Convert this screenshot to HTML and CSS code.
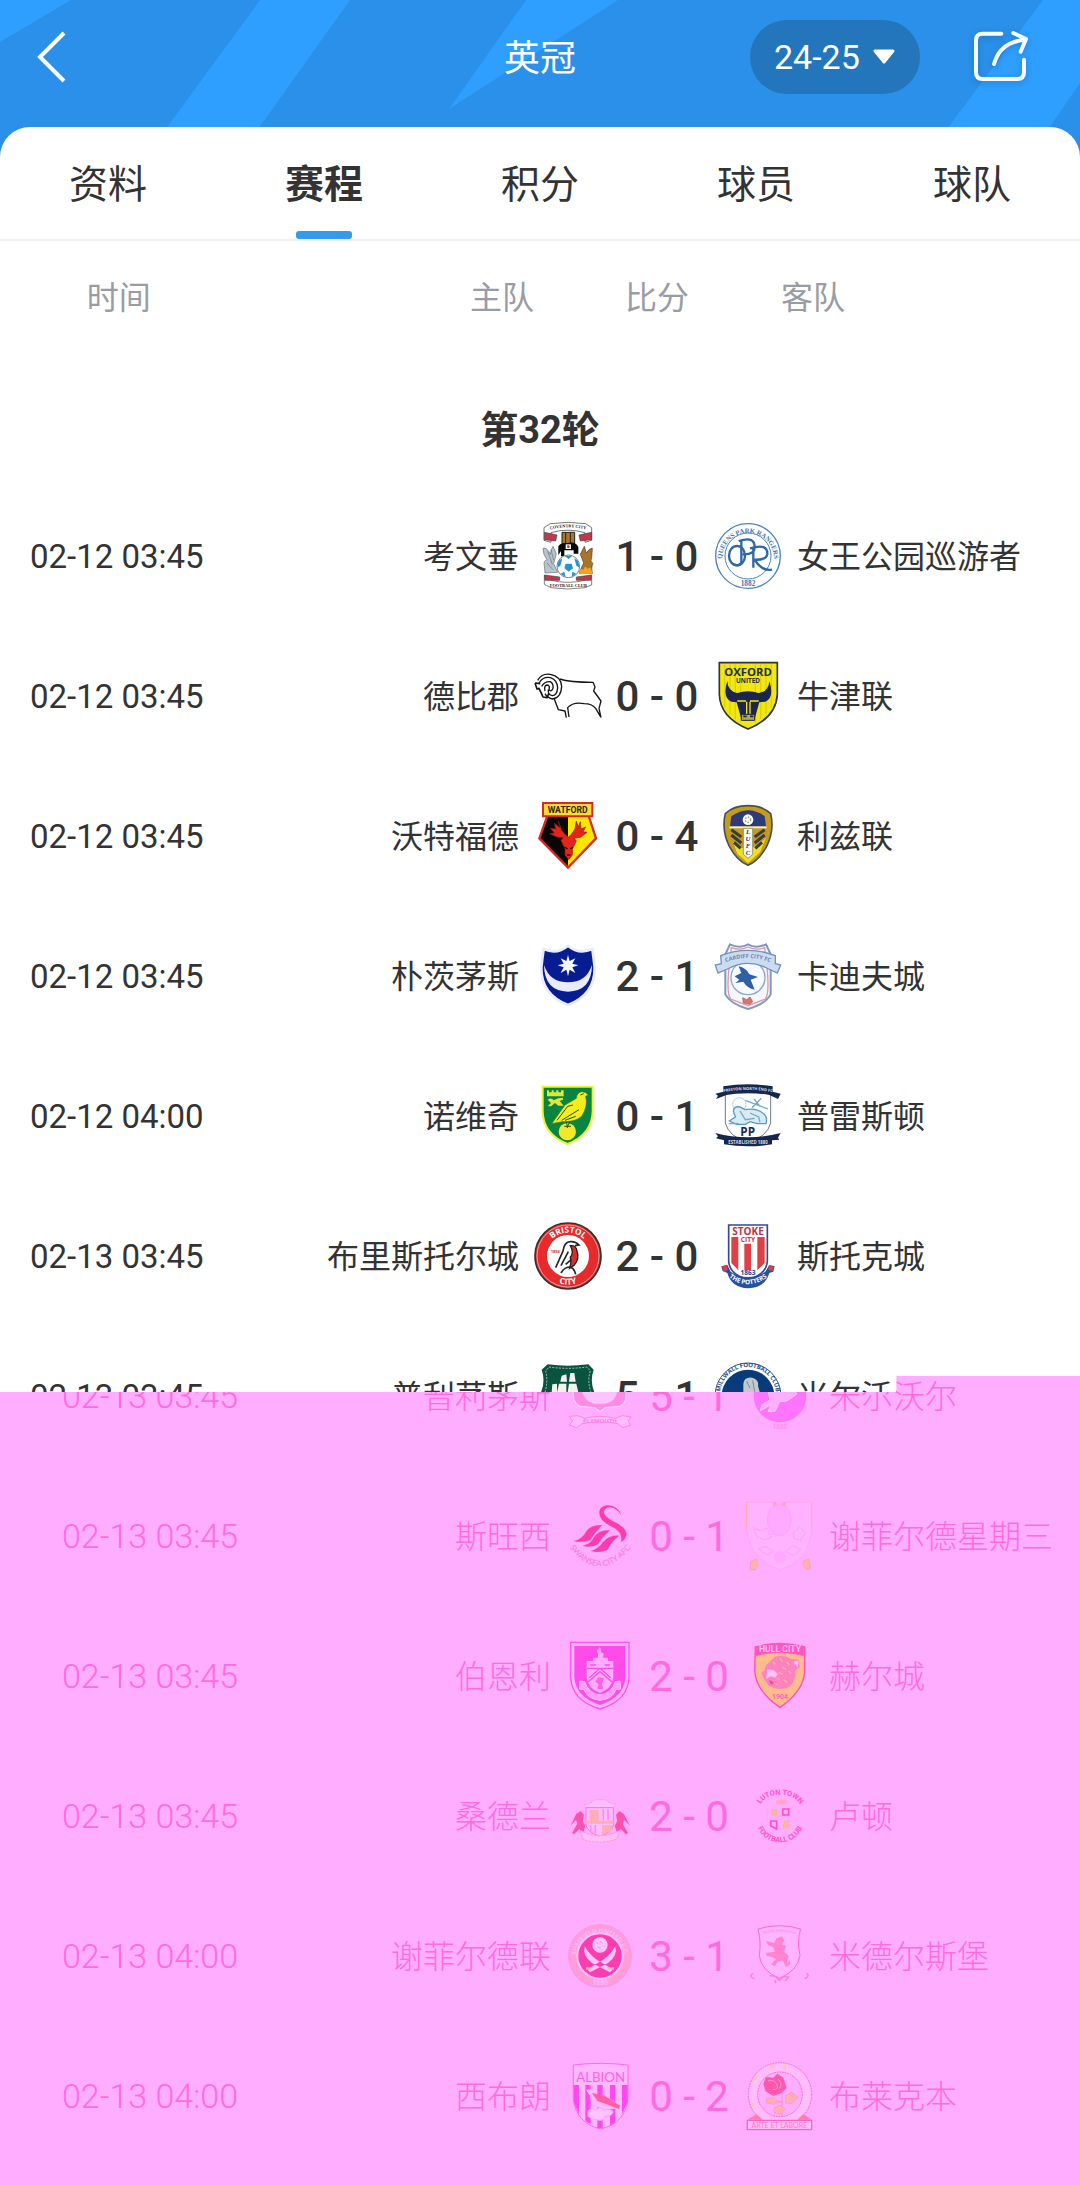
FILE: index.html
```html
<!DOCTYPE html>
<html lang="zh-CN">
<head>
<meta charset="utf-8">
<meta name="viewport" content="width=device-width, initial-scale=1">
<title>英冠</title>
<link rel="stylesheet" href="styles.css">
</head>
<body>
<header class="hero">
  <svg class="hero-bg" viewBox="0 0 1080 160" preserveAspectRatio="none" aria-hidden="true">
    <path fill="#2e9fff" d="M0 0H71L0 42ZM260 0H350L236 160H143ZM526 0H618L449 109ZM1043 0H1080V83L1027 160H924Z"/>
  </svg>
  <div class="bar">
    <button class="icon-btn back" type="button" aria-label="返回">
      <svg width="32" height="56" viewBox="0 0 32 56"><path d="M28 4L4 28L28 52" fill="none" stroke="#fff" stroke-width="4"/></svg>
    </button>
    <h1 class="title">英冠</h1>
    <div class="tools">
      <label class="season">
        <select class="season-select" aria-label="赛季"><option>24-25</option></select>
        <svg width="24" height="16" viewBox="0 0 24 16" aria-hidden="true"><path d="M3 2H21L12 13Z" fill="#fff" stroke="#fff" stroke-width="3" stroke-linejoin="round"/></svg>
      </label>
      <button class="icon-btn share" type="button" aria-label="分享">
        <svg width="60" height="56" viewBox="816 90 180 168" fill="none" stroke="#f4fdff" stroke-width="12" stroke-linecap="round" stroke-linejoin="round"><path d="M904 104H848Q828 104 828 124V220Q828 240 848 240H952Q972 240 972 220V182M882 195Q900 128 976 122M940 102L978 120L962 158"/></svg>
      </button>
    </div>
  </div>
</header>

<main class="sheet">
  <nav class="tabs">
    <a class="tab" href="#info">资料</a>
    <a class="tab tab-on" href="#fixtures">赛程</a>
    <a class="tab" href="#standings">积分</a>
    <a class="tab" href="#players">球员</a>
    <a class="tab" href="#teams">球队</a>
  </nav>

  <div class="upper">
  <table class="matches">
    <colgroup><col class="c-time"><col><col class="c-score"><col class="c-away"></colgroup>
    <thead>
      <tr class="heads"><th class="h-time" scope="col">时间</th><th class="h-home" scope="col">主队</th><th scope="col">比分</th><th class="h-away" scope="col">客队</th></tr>
    </thead>
    <tbody>
      <tr class="round"><th colspan="4" scope="colgroup">第32轮</th></tr>
      <tr>
        <td class="time">02-12 03:45</td>
        <td><div class="team home"><span class="name">考文垂</span>
          <svg class="crest" viewBox="36 60 210 210" aria-hidden="true">
            <path d="M88 68Q140 60 194 68L212 80V118L192 124V95Q140 80 90 95V124L69 118V80Z" fill="#fff" stroke="#333" stroke-width="2"/>
            <path d="M70 94L108 102L104 120L70 116ZM212 94L174 102L178 120L212 116Z" fill="#c4364a" stroke="#444" stroke-width="2"/>
            <path id="cov1" d="M76 88Q140 70 206 88" fill="none"/>
            <text class="c-serif" font-size="13" fill="#222"><textPath href="#cov1" startOffset="50%" text-anchor="middle">COVENTRY CITY</textPath></text>
            <path d="M123 94H161V128H123Z" fill="#a87728" stroke="#222" stroke-width="3"/><path d="M134 94V128M148 94V128" stroke="#222" stroke-width="3"/>
            <path d="M112 162V136Q118 124 140 126Q164 120 172 138V158H158V148H130V166H120V150Z" fill="#080808"/>
            <path d="M134 130H150V144H134Z" fill="#fff"/><circle cx="142" cy="137" r="4" fill="#d22"/>
            <path d="M66 142Q78 138 88 160Q90 144 96 136L106 158L98 188L110 214L72 216L70 194Q66 180 78 176Q66 162 66 142Z" fill="#b7c4cc" stroke="#61717c" stroke-width="2"/>
            <path d="M80 150L94 190M90 146L98 178M78 186L96 206" stroke="#61717c" stroke-width="2"/>
            <path d="M214 142Q204 142 196 156L190 136L178 160L188 186L174 216L214 218Q210 196 216 188Q206 180 212 170Z" fill="#a9752a" stroke="#57390f" stroke-width="2"/>
            <path d="M174 220Q176 198 188 206Q192 190 200 204Q210 190 214 218Z" fill="#f4a11f"/>
            <circle cx="142" cy="196" r="34" fill="#fff" stroke="#445" stroke-width="2"/>
            <path d="M134 188H152L156 202L143 212L130 202ZM112 180L124 172L118 194L109 200ZM172 180L160 172L166 194L175 200ZM130 164H154L143 174ZM118 218L130 212L134 228ZM166 218L154 212L152 228Z" fill="#2496cd"/>
            <path d="M70 224L90 228V238Q140 250 192 238V228L212 224V252L192 260Q140 268 90 260L70 250Z" fill="#fff" stroke="#444" stroke-width="2"/>
            <path d="M70 222L116 228V238L72 238ZM212 222L166 228V238L210 238Z" fill="#c4364a" stroke="#444" stroke-width="2"/>
            <text x="142" y="257" text-anchor="middle" class="c-serif" font-size="13" fill="#222">FOOTBALL CLUB</text>
          </svg></div></td>
        <td class="score">1 - 0</td>
        <td><div class="team">
          <svg class="crest" viewBox="579 60 210 210" aria-hidden="true">
            <g fill="none" stroke="#4a84bd"><circle cx="684" cy="165" r="97" stroke-width="4"/><circle cx="684" cy="165" r="69" stroke-width="3"/></g>
            <path id="qpr1" d="M607 186A78 78 0 1 1 761 186" fill="none"/>
            <text class="c-serif" font-size="20" fill="#3f74ad"><textPath href="#qpr1" startOffset="50%" text-anchor="middle">QUEENS PARK RANGERS</textPath></text>
            <text x="684" y="254" text-anchor="middle" class="c-serif" font-size="22" fill="#3f74ad">1882</text>
            <g fill="none" stroke="#2e68a8" stroke-width="7"><ellipse cx="651" cy="164" rx="24" ry="29"/><path d="M664 118V186Q656 198 642 190M656 120Q704 104 704 138Q704 162 668 160M700 140V200M690 142Q744 126 742 160Q738 178 704 176Q726 212 756 206"/></g>
          </svg><span class="name">女王公园巡游者</span></div></td>
      </tr>
      <tr>
        <td class="time">02-12 03:45</td>
        <td><div class="team home"><span class="name">德比郡</span>
          <svg class="crest" viewBox="36 480 210 210" aria-hidden="true">
            <g fill="none" stroke="#151515" stroke-width="4" stroke-linejoin="round"><path d="M116 534Q146 544 216 544L222 558L218 570L240 600L234 622L240 650M238 646L224 622Q212 608 190 608Q156 602 140 620L144 648M136 650L132 630L112 626L100 594"/><path d="M50 538Q62 516 88 520Q120 526 122 556Q120 592 94 594Q78 590 72 578M54 546Q66 526 88 530Q108 536 110 560Q108 584 94 584Q80 582 82 566M62 556Q72 540 88 542Q98 548 96 562Q92 574 84 566Q88 552 78 552Q68 554 72 570"/><path d="M42 546L48 564L54 562L66 588L78 590L84 576M42 546L58 548M66 588L60 574" stroke-width="5"/></g>
          </svg></div></td>
        <td class="score">0 - 0</td>
        <td><div class="team">
          <svg class="crest" viewBox="579 480 210 210" aria-hidden="true">
            <path d="M598 485H772V580Q768 650 684 684Q600 650 598 580Z" fill="#f2e713" stroke="#2a3445" stroke-width="5"/>
            <path d="M614 490V620M630 490V640M646 490V654M662 490V664M706 490V664M722 490V654M738 490V640M754 490V620" stroke="#ddd00c" stroke-width="4"/>
            <text x="684" y="524" text-anchor="middle" class="c-sans" font-size="34" fill="#252f42">OXFORD</text>
            <text x="684" y="545" text-anchor="middle" class="c-sans" font-size="19" fill="#252f42">UNITED</text>
            <path d="M622 540Q624 572 652 576Q684 566 716 576Q746 572 748 540Q764 590 736 602L718 604L704 654Q684 662 664 654L650 604L634 602Q606 588 622 540Z" fill="#1c2550"/>
            <path d="M652 600H678M690 600H716M680 602V640M690 602V640" stroke="#f2e713" stroke-width="4"/><path d="M664 640H704V658H664Z" fill="#b9a934" stroke="#1c2550" stroke-width="3"/><path d="M670 646H680M690 646H700" stroke="#1c2550" stroke-width="5"/>
          </svg><span class="name">牛津联</span></div></td>
      </tr>
      <tr>
        <td class="time">02-12 03:45</td>
        <td><div class="team home"><span class="name">沃特福德</span>
          <svg class="crest" viewBox="36 60 210 210" aria-hidden="true">
            <path d="M80 104H202L226 172L141 262L54 172Z" fill="#fce600"/><path d="M80 104H141V262L54 172Z" fill="#090606"/>
            <path d="M78 108L55 172L141 260L225 172L204 108" fill="none" stroke="#d52a24" stroke-width="7"/>
            <path d="M66 66H214V106H66Z" fill="#fbd93b" stroke="#d52a24" stroke-width="6"/>
            <text x="140" y="95" text-anchor="middle" class="c-cond" font-size="26" fill="#332209">WATFORD</text>
            <path d="M112 120L118 140L106 132L100 126L104 144L88 142L100 156L86 158L108 168L126 170L120 178L132 204V222L143 236L154 222L154 204L166 180L160 172L180 168L198 154L186 152L194 138L180 144L178 122L172 138L166 120L162 144L150 162L142 168L134 162L122 148Z" fill="#e3251e" stroke="#8f1814" stroke-width="2"/>
            <path d="M130 198L140 204M156 198L148 204M138 222H148" stroke="#300" stroke-width="4"/>
          </svg></div></td>
        <td class="score">0 - 4</td>
        <td><div class="team">
          <svg class="crest" viewBox="579 60 210 210" aria-hidden="true">
            <path d="M684 74Q728 74 752 98Q764 146 740 196Q716 240 684 253Q652 240 628 196Q604 146 616 98Q640 74 684 74Z" fill="#c49b1c" stroke="#44505c" stroke-width="5"/>
            <path d="M638 180Q684 230 738 170L720 214L684 246L652 218Z" fill="#efe025"/>
            <path d="M634 106Q660 88 684 88Q710 88 734 106L738 136H630Z" fill="#2d3b7d"/><path d="M628 139H740" stroke="#eee" stroke-width="5"/>
            <path d="M634 146L664 168M634 162L664 186M642 184L662 202M734 146L704 168M734 162L704 186M726 184L706 202" stroke="#373c42" stroke-width="9"/>
            <path d="M670 142H698V220L684 232L670 220Z" fill="#f7f7f1" stroke="#7b7443" stroke-width="2"/>
            <circle cx="684" cy="116" r="16" fill="#fff"/><circle cx="684" cy="116" r="8" fill="none" stroke="#9ca878" stroke-width="4" stroke-dasharray="5 4"/>
            <g class="c-serif" font-size="20" fill="#263a70" font-style="italic" text-anchor="middle"><text x="684" y="160">L</text><text x="684" y="181">U</text><text x="684" y="202">F</text><text x="684" y="223">C</text></g>
          </svg><span class="name">利兹联</span></div></td>
      </tr>
      <tr>
        <td class="time">02-12 03:45</td>
        <td><div class="team home"><span class="name">朴茨茅斯</span>
          <svg class="crest" viewBox="36 480 210 210" aria-hidden="true">
            <path d="M68 504Q108 522 141 494Q174 522 214 504Q218 530 221 560Q222 640 141 672Q60 640 61 560Q64 530 68 504Z" fill="#071c91" stroke="#e9ecfa" stroke-width="8"/>
            <path d="M69 552Q86 604 141 604Q196 604 213 552Q212 630 141 632Q70 630 69 552Z" fill="#e9ebfa"/>
            <path d="M141 522L146 540L163 532L154 548L172 553L154 559L163 576L146 566L141 586L136 566L119 576L128 559L110 553L128 548L119 532L136 540Z" fill="#f5f6fc"/>
          </svg></div></td>
        <td class="score">2 - 1</td>
        <td><div class="team">
          <svg class="crest" viewBox="579 480 210 210" aria-hidden="true">
            <path d="M630 490Q660 504 684 490Q708 504 738 490L752 520V640Q738 668 684 684Q630 668 616 640V520Z" fill="#f6f7fb" stroke="#8299bd" stroke-width="6"/>
            <path d="M634 500Q660 510 684 498Q708 510 734 500L742 570Q748 640 736 654L684 674L632 654Q620 640 626 570Z" fill="none" stroke="#d99aaa" stroke-width="4"/>
            <circle cx="684" cy="590" r="51" fill="#f7faff" stroke="#8fa8cc" stroke-width="4"/>
            <path d="M602 524Q684 492 766 524V548L782 552L772 576L746 564Q684 530 622 564L594 576L586 552L604 548Z" fill="#cbdcf0" stroke="#7192be" stroke-width="4"/>
            <path id="cardiff1" d="M604 550Q684 512 764 550" fill="none"/>
            <text class="c-sans" font-size="17" fill="#6a88b5"><textPath href="#cardiff1" startOffset="50%" text-anchor="middle">CARDIFF CITY FC</textPath></text>
            <path d="M644 586L664 576L656 556Q678 560 688 580L714 588L692 596L704 626Q682 622 670 602L646 606L658 596Z" fill="#2e60a4"/>
            <path d="M668 650L680 656L690 648L698 662L690 670L670 666Z" fill="#d4776e" stroke="#c34640" stroke-width="2"/>
          </svg><span class="name">卡迪夫城</span></div></td>
      </tr>
      <tr>
        <td class="time">02-12 04:00</td>
        <td><div class="team home"><span class="name">诺维奇</span>
          <svg class="crest" viewBox="36 60 210 210" aria-hidden="true">
            <path d="M65 77H215V150Q214 220 140 249Q66 220 65 150Z" fill="#088541" stroke="#f0ef30" stroke-width="6"/>
            <path d="M78 88H84V94H92V88H98V94H106V88H112V94H120V88H128V106H78ZM80 116Q92 108 98 118L112 112L126 110V116L116 120L128 134H112L102 126L90 136H80L90 126Z" fill="#dfe73a"/>
            <circle cx="139" cy="212" r="26" fill="#efe82b"/>
            <path d="M92 188L132 132L166 112Q168 92 184 92Q194 92 202 102L194 106Q202 136 182 166Q162 184 124 182Z" fill="#f3ed19" stroke="#36742c" stroke-width="2"/>
            <path d="M108 178L140 136L156 132M122 178L174 146M132 178L164 166M178 102L188 98M136 182L140 200M148 180L138 200M130 196H150" fill="none" stroke="#294e24" stroke-width="3"/>
          </svg></div></td>
        <td class="score">0 - 1</td>
        <td><div class="team">
          <svg class="crest" viewBox="579 60 210 210" aria-hidden="true">
            <path d="M616 96H752V186Q742 226 684 246Q626 226 616 186Z" fill="#fff" stroke="#27344f" stroke-width="2"/>
            <path d="M610 76Q684 64 758 76V92L782 98L774 114L748 102Q684 90 620 102L588 114L594 104L586 98L610 92ZM586 216Q684 242 782 216L774 230L778 236L756 238V250Q684 262 612 250V238L588 232L594 226Z" fill="#17264c"/>
            <path id="pne1" d="M608 94Q684 80 760 94" fill="none"/>
            <text class="c-sans" font-size="12" fill="#d7dce6"><textPath href="#pne1" startOffset="50%" text-anchor="middle">PRESTON NORTH END FC</textPath></text>
            <text x="684" y="250" text-anchor="middle" class="c-sans" font-size="13" fill="#d7dce6">ESTABLISHED 1880</text>
            <circle cx="658" cy="130" r="20" fill="none" stroke="#8fb7ce" stroke-width="2"/>
            <path d="M628 180L646 168L640 150Q642 134 660 138L674 146Q708 140 728 156Q744 166 738 188H712L690 182L676 190H650Z" fill="#d8eaf3" stroke="#559cc3" stroke-width="4"/>
            <path d="M696 140L724 112M702 114L720 136M676 118L744 144M626 188H656M660 150L676 176L704 172M690 156L716 168L720 184" fill="none" stroke="#75a9c7" stroke-width="4"/>
            <text x="683" y="226" text-anchor="middle" class="c-sans" font-size="35" fill="#172a52">PP</text>
          </svg><span class="name">普雷斯顿</span></div></td>
      </tr>
      <tr>
        <td class="time">02-13 03:45</td>
        <td><div class="team home"><span class="name">布里斯托尔城</span>
          <svg class="crest" viewBox="36 480 210 210" aria-hidden="true">
            <circle cx="141" cy="585" r="99" fill="#e72b2d" stroke="#353132" stroke-width="5"/><circle cx="141" cy="585" r="93" fill="none" stroke="#f8d8d8" stroke-width="2"/><circle cx="141" cy="585" r="63" fill="#fff"/>
            <path id="bc1" d="M71 585A70 70 0 0 1 211 585" fill="none"/><path id="bc2" d="M55 585A86 86 0 0 0 227 585" fill="none"/>
            <g class="c-sans" font-size="25" fill="#fff"><text><textPath href="#bc1" startOffset="50%" text-anchor="middle">BRISTOL</textPath></text><text><textPath href="#bc2" startOffset="50%" text-anchor="middle">CITY</textPath></text></g>
            <path d="M148 554Q166 552 168 570Q176 594 160 612L146 622Q152 604 148 588Q160 576 148 554Z" fill="#d92e30" stroke="#222" stroke-width="4"/>
            <path d="M104 620L126 570Q130 542 148 542Q162 540 174 552L162 554M120 614L142 572M120 636Q130 618 148 618Q160 622 164 640M134 610L148 598" fill="none" stroke="#262626" stroke-width="5"/>
            <text x="103" y="575" text-anchor="middle" class="c-sans" font-size="12" fill="#c33">1894</text>
          </svg></div></td>
        <td class="score">2 - 0</td>
        <td><div class="team">
          <svg class="crest" viewBox="579 480 210 210" aria-hidden="true">
            <path d="M626 492H742V600Q740 640 684 656Q628 640 626 600Z" fill="#fff" stroke="#334a92" stroke-width="5"/>
            <path d="M634 528H655V628L634 606ZM673 548H693V628H673ZM712 528H734V606L712 628Z" fill="#df4048"/>
            <text x="684" y="523" text-anchor="middle" class="c-sans" font-size="30" fill="#c72f43">STOKE</text>
            <text x="684" y="543" text-anchor="middle" class="c-sans" font-size="20" fill="#c72f43">CITY</text>
            <path d="M604 616L622 612L632 632Q684 664 736 632L748 612L764 616L760 632L748 636Q736 680 684 682Q634 680 622 636L608 630Z" fill="#2751a0"/>
            <path d="M606 616L620 612L624 626L612 632ZM746 614L762 617L758 630L744 626Z" fill="#d83c4d"/>
            <text x="684" y="643" text-anchor="middle" class="c-sans" font-size="20" fill="#27468d">1863</text>
            <path id="stoke1" d="M618 642Q684 698 750 642" fill="none"/>
            <text class="c-sans" font-size="19" fill="#fff"><textPath href="#stoke1" startOffset="50%" text-anchor="middle">THE POTTERS</textPath></text>
          </svg><span class="name">斯托克城</span></div></td>
      </tr>
      <tr>
        <td class="time">02-13 03:45</td>
        <td><div class="team home"><span class="name">普利茅斯</span>
          <svg class="crest" viewBox="-24 30 210 210" aria-hidden="true">
            <path d="M20 40Q80 48 142 40L158 56Q146 90 160 124L150 180L80 210L10 180L0 124Q14 90 2 56Z" fill="#08543f"/>
            <path d="M24 48Q80 56 138 48L148 60Q138 90 150 124M12 124Q22 90 14 60L24 48" fill="none" stroke="#f0f5f2" stroke-width="2" stroke-dasharray="6 4"/>
            <path d="M62 74L58 92H78L76 70ZM88 66L84 92H104L100 66ZM34 100L32 124H48V98ZM54 98L48 124H76V98ZM84 98L80 124H112L106 98Z" fill="#f2f3ed"/>
          </svg></div></td>
        <td class="score">5 - 1</td>
        <td><div class="team">
          <svg class="crest" viewBox="519 30 210 210" aria-hidden="true">
            <circle cx="624" cy="135" r="99" fill="#fff" stroke="#315b91" stroke-width="3"/><circle cx="624" cy="135" r="79" fill="#073b7b"/>
            <path id="mil1" d="M541 145A84 84 0 1 1 707 145" fill="none"/>
            <text class="c-sans" font-size="18" fill="#264f83"><textPath href="#mil1" startOffset="50%" text-anchor="middle">MILLWALL FOOTBALL CLUB</textPath></text>
            <path d="M610 126V98Q612 78 636 80Q658 86 654 104L660 126L646 140H608Z" fill="#c2c8cb"/><path d="M620 90L630 112M638 88L644 122" stroke="#7c8c99" stroke-width="3"/>
          </svg><span class="name">米尔沃尔</span></div></td>
      </tr>
    </tbody>
  </table>
  </div>

  <section class="lower">
  <table class="matches shifted">
    <colgroup><col class="c-time"><col><col class="c-score"><col class="c-away"></colgroup>
    <tbody>
      <tr>
        <td class="time">02-13 03:45</td>
        <td><div class="team home"><span class="name">普利茅斯</span>
          <svg class="crest" viewBox="71 30 210 210" aria-hidden="true">
            <path d="M96 110V138Q98 156 116 166L160 170L176 182L192 170L236 166Q254 156 254 138V110Z" fill="#ff8be7" stroke="#ffcfff" stroke-width="4"/><path d="M122 120H228Q224 152 192 158H158Q128 150 122 120Z" fill="#ffc3ff"/>
            <path d="M84 196L110 194L130 202Q176 190 222 202L244 194L270 198L260 210L268 222L244 230L230 218Q176 208 122 218L106 230L84 222L94 210Z" fill="#ffbdfc" stroke="#ff84e8" stroke-width="3"/>
            <text x="176" y="216" text-anchor="middle" class="c-sans" font-size="18" fill="#ff7fe7">PLYMOUTH</text>
          </svg></div></td>
        <td class="score">5 - 1</td>
        <td><div class="team">
          <svg class="crest" viewBox="615 30 210 210" aria-hidden="true">
            <circle cx="720" cy="135" r="79" fill="#ff74ff"/><circle cx="720" cy="135" r="98" fill="none" stroke="#ff93f7" stroke-width="2" stroke-dasharray="3 6"/>
            <path d="M760 106L770 130L740 150L718 152L706 180L684 182L694 160L660 180L666 162L690 146L684 120Z" fill="#ffadff" stroke="#ffcaff" stroke-width="3"/>
            <text x="720" y="234" text-anchor="middle" class="c-sans" font-size="19" fill="#ff8df2">1885</text>
          </svg><span class="name">米尔沃尔</span></div></td>
      </tr>
      <tr>
        <td class="time">02-13 03:45</td>
        <td><div class="team home"><span class="name">斯旺西</span>
          <svg class="crest" viewBox="71 450 210 210" aria-hidden="true">
            <path d="M240 492Q228 462 196 463Q164 470 178 500Q184 514 220 532Q246 548 238 574Q260 560 254 542Q248 526 214 510Q184 494 188 480Q196 462 218 472Q232 480 240 492ZM182 522Q148 520 134 542Q122 566 96 570Q122 576 146 568Q160 546 182 522ZM206 538Q174 534 158 558Q148 580 124 584Q148 592 170 580Q184 556 206 538ZM234 554Q204 550 184 574Q174 592 148 600Q176 608 198 596Q214 568 234 554Z" fill="#ff3cae"/>
            <path id="swa1" d="M74 576Q176 716 280 576" fill="none"/>
            <text class="c-light" font-size="24" fill="#ff73dc"><textPath href="#swa1" startOffset="50%" text-anchor="middle">SWANSEA CITY AFC</textPath></text>
          </svg></div></td>
        <td class="score">0 - 1</td>
        <td><div class="team">
          <svg class="crest" viewBox="615 450 210 210" aria-hidden="true">
            <path d="M620 454H815V540Q806 630 720 656Q634 630 620 540Z" fill="#ffb3ff" stroke="#ffa0ea" stroke-width="2"/><path d="M620 454V530M815 454V530" stroke="#ffae9d" stroke-width="3"/>
            <ellipse cx="718" cy="506" rx="36" ry="48" fill="#ffaaff" stroke="#ff9cf8" stroke-width="2"/><circle cx="720" cy="618" r="18" fill="#ffa8fd"/>
            <path d="M640 530L662 540L680 530L694 560L674 566L650 558ZM760 544L780 528L796 546L782 568L762 562ZM656 594L676 586L700 600L682 612ZM736 602L760 584L782 596L760 614Z" fill="none" stroke="#ff99ed" stroke-width="3" stroke-dasharray="6 3"/>
            <path d="M700 456H708V464H700ZM728 456H736V464H728ZM632 632L650 624L654 642L646 656H630ZM790 630L806 624L812 654H798L788 640Z" fill="#ffb3a2" stroke="#ff92cb" stroke-width="2"/>
          </svg><span class="name">谢菲尔德星期三</span></div></td>
      </tr>
      <tr>
        <td class="time">02-13 03:45</td>
        <td><div class="team home"><span class="name">伯恩利</span>
          <svg class="crest" viewBox="71 60 210 210" aria-hidden="true">
            <path d="M88 64H263V170Q260 238 176 264Q92 238 88 170Z" fill="#ffb4ff" stroke="#ff51ed" stroke-width="4"/><path d="M99 75H252V170Q248 228 176 252Q104 228 99 170Z" fill="#ff4bea"/>
            <path d="M136 120H156V110H170V98L166 90L176 78L180 94L188 98L184 110H200V120H216V170Q214 200 176 216Q138 200 136 170Z" fill="#ffadff"/>
            <path d="M146 132H164M190 132H206M136 142H216M136 186L176 152L216 186M144 170L176 142L208 170" fill="none" stroke="#ff4bea" stroke-width="4"/>
            <path d="M170 168L188 172L182 190L186 204H168L172 190L162 182Z" fill="#ff60ed"/>
            <path d="M116 180L130 182Q142 218 176 222Q210 218 222 182L236 180L238 204L224 206Q214 234 176 238Q138 234 128 206L114 204Z" fill="#ff9dff" stroke="#ffc0ff" stroke-width="3"/>
          </svg></div></td>
        <td class="score">2 - 0</td>
        <td><div class="team">
          <svg class="crest" viewBox="615 60 210 210" aria-hidden="true">
            <path d="M646 78Q720 56 794 78V150Q792 210 720 259Q648 210 644 150Z" fill="#ffbc8d" stroke="#ff4faf" stroke-width="4"/><path d="M645 78Q720 56 795 78V106Q720 84 645 106Z" fill="#ff57bb"/>
            <text x="720" y="94" text-anchor="middle" class="c-cond" font-size="26" fill="#ffb7ff">HULL CITY</text>
            <path d="M678 132L692 120L704 108Q730 98 752 114L776 116L780 138L766 148Q768 182 746 198Q716 212 686 194L674 178L664 156L674 148Z" fill="#ff81bf"/>
            <path d="M698 122L706 130M720 112L728 122M740 122L748 132M728 138L738 146M716 154L728 160M746 150L754 158M730 176L742 184M702 186L714 192M712 172L720 176" stroke="#ffb599" stroke-width="4"/>
            <path d="M682 144L702 148L714 160L706 170L692 166L678 174Z" fill="#ffbdfa"/><path d="M760 122L776 118L774 140Z" fill="#ffbdfa"/><path d="M686 176L702 184L694 192Z" fill="#ff439e"/>
            <text x="720" y="235" text-anchor="middle" class="c-cond" font-size="21" fill="#ff66af">1904</text>
          </svg><span class="name">赫尔城</span></div></td>
      </tr>
      <tr>
        <td class="time">02-13 03:45</td>
        <td><div class="team home"><span class="name">桑德兰</span>
          <svg class="crest" viewBox="71 480 210 210" aria-hidden="true">
            <path d="M148 546L164 536L190 536L208 546L224 550L216 560H134L128 552Z" fill="#ffbfff" stroke="#ff83d7" stroke-width="2" stroke-dasharray="5 3"/>
            <path d="M134 560H216V614Q210 634 176 646Q140 634 134 614Z" fill="#ffbeff" stroke="#ff75cc" stroke-width="3"/><path d="M144 566H172V600H144ZM182 612H212V628L182 642Z" fill="#ffadb9"/><path d="M134 604H216" stroke="#ffafa9" stroke-width="9"/>
            <path d="M186 564V598M200 564V598M148 612V632M162 612V636" stroke="#ff8aeb" stroke-width="5"/>
            <path d="M104 580L118 570L128 582L124 600L132 614L124 638L114 624L98 640L92 636L108 608L104 596L88 614ZM248 580L234 570L224 582L228 600L220 614L228 638L238 624L254 640L260 636L244 608L248 596L266 614Z" fill="#ff50af"/>
            <path d="M116 628Q176 660 236 628L226 654Q176 672 126 656Z" fill="#ffc0f7" stroke="#ff94d8" stroke-width="3" stroke-dasharray="8 3"/>
          </svg></div></td>
        <td class="score">2 - 0</td>
        <td><div class="team">
          <svg class="crest" viewBox="615 480 210 210" aria-hidden="true">
            <path id="lut1" d="M654 562Q672 520 720 522Q766 520 788 562" fill="none"/><path id="lut2" d="M650 614Q670 662 720 664Q770 662 790 614" fill="none"/>
            <g class="c-cond" font-size="22" fill="#ff51c8"><text><textPath href="#lut1" startOffset="50%" text-anchor="middle">LUTON TOWN</textPath></text><text><textPath href="#lut2" startOffset="50%" text-anchor="middle">FOOTBALL CLUB</textPath></text></g>
            <path d="M708 542Q724 530 744 540L728 550H710Z" fill="#ffa6ba"/><path d="M694 564H712V584H694ZM728 600L746 598V620L728 624Z" fill="#ffb39a"/>
            <path d="M728 564H746V582H728ZM692 600H710V624L692 614Z" fill="#ffadff" stroke="#ff4fc4" stroke-width="5"/>
            <circle cx="720" cy="590" r="6" fill="none" stroke="#ff9bea" stroke-width="2"/><path d="M682 562V602M756 562V602" stroke="#ff9bea" stroke-dasharray="3 4" stroke-width="3"/>
          </svg><span class="name">卢顿</span></div></td>
      </tr>
      <tr>
        <td class="time">02-13 04:00</td>
        <td><div class="team home"><span class="name">谢菲尔德联</span>
          <svg class="crest" viewBox="71 60 210 210" aria-hidden="true">
            <circle cx="176" cy="165" r="94" fill="#ff9dd9" stroke="#ff93ed" stroke-width="3"/><circle cx="176" cy="165" r="68" fill="#ff3dae" stroke="#ffc0ff" stroke-width="6"/>
            <path id="shu1" d="M104 168A72 72 0 0 1 248 168" fill="none"/>
            <text class="c-sans" font-size="19" fill="#ffbaff"><textPath href="#shu1" startOffset="50%" text-anchor="middle">SHEFFIELD UNITED F.C.</textPath></text>
            <text x="177" y="253" text-anchor="middle" class="c-sans" font-size="21" fill="#ffbaff">1889</text>
            <circle cx="176" cy="132" r="23" fill="#ffc4ff"/><path d="M164 124L170 128M176 120L184 126M168 138L178 142M186 134L190 138" stroke="#ff8be2" stroke-width="3"/>
            <path d="M130 136Q122 164 152 186L206 214L214 206L190 190Q150 172 130 136ZM222 136Q230 164 200 186L146 214L138 206L162 190Q202 172 222 136Z" fill="#ffc4ff"/><path d="M134 202H154M198 202H218" stroke="#ffb1c4" stroke-width="7"/>
          </svg></div></td>
        <td class="score">3 - 1</td>
        <td><div class="team">
          <svg class="crest" viewBox="615 60 210 210" aria-hidden="true">
            <path d="M654 84Q720 64 782 84Q770 120 780 164Q772 210 718 232Q664 210 658 164Q664 120 654 84Z" fill="#ffb4ff" stroke="#ff68cf" stroke-width="3"/>
            <path id="mid1" d="M664 102Q718 82 774 102" fill="none"/><text class="c-sans" font-size="11" fill="#ff94e9"><textPath href="#mid1" startOffset="50%" text-anchor="middle">MIDDLESBROUGH</textPath></text>
            <path d="M710 112L726 106L732 118L726 130L738 136L732 152L746 164L740 190L748 178L752 188L738 198L728 178L714 182L704 196L694 190L708 174L696 168L680 164L678 156L704 152L700 138L684 132L678 120L702 126Z" fill="#ff83d0"/>
            <path d="M640 218Q630 220 634 228L644 234M798 218Q808 220 802 228L794 234M688 224L706 226L718 238L732 226L746 228L736 240M704 238L708 246" fill="none" stroke="#ff7ad7" stroke-width="4"/>
          </svg><span class="name">米德尔斯堡</span></div></td>
      </tr>
      <tr>
        <td class="time">02-13 04:00</td>
        <td><div class="team home"><span class="name">西布朗</span>
          <svg class="crest" viewBox="71 480 210 210" aria-hidden="true">
            <path d="M96 492Q176 482 260 492V590Q254 666 178 684Q102 666 96 590Z" fill="#ffb7ff" stroke="#ff68ef" stroke-width="3"/>
            <path d="M97 552H113V640L97 604ZM132 552H148V670L132 660ZM168 552H184V682H168ZM206 552H222V664L206 674ZM242 552H259V604L242 640Z" fill="#ff48ef"/>
            <text x="178" y="544" text-anchor="middle" class="c-light" font-size="40" fill="#ff63dd">ALBION</text>
            <path d="M134 566L156 564L170 582L196 586L236 616L230 624L176 624L150 602L146 584Z" fill="#ffb9fa"/><path d="M152 576L190 584L236 614L232 624L196 610L168 600Z" fill="#ff5fa9"/>
            <path d="M140 630Q150 618 164 628Q176 612 188 628Q204 620 216 632Q210 648 190 646Q186 664 166 656Q152 658 140 646Z" fill="#ffc4ff" stroke="#ff9dfa" stroke-width="3"/>
          </svg></div></td>
        <td class="score">0 - 2</td>
        <td><div class="team">
          <svg class="crest" viewBox="615 480 210 210" aria-hidden="true">
            <circle cx="720" cy="580" r="81" fill="none" stroke="#ffbef9" stroke-width="25"/><g fill="none" stroke="#ff65c9" stroke-width="3" stroke-dasharray="5 3"><circle cx="720" cy="580" r="95"/><circle cx="720" cy="580" r="67"/></g>
            <path d="M638 540L650 524M690 500L698 496M734 490V506M634 614L646 608" stroke="#ffc5a6" stroke-width="7"/>
            <path d="M700 584L726 574V646M726 602L704 602" fill="none" stroke="#ff8ac2" stroke-width="3"/>
            <path d="M670 548L678 528L700 530L712 518L730 530L736 548L740 562L720 578L698 584L676 570Z" fill="#ff57ae"/><path d="M684 540Q702 534 710 550T698 566M714 534Q730 550 718 562" fill="none" stroke="#ff9bce" stroke-width="3"/>
            <path d="M678 594L700 590L718 602L700 610L680 606ZM736 584L754 574L774 588L754 608L738 606ZM702 622L720 612L736 624L720 640L704 636Z" fill="#ffaeb2" stroke="#ff91ba" stroke-width="2"/>
            <path d="M622 656L650 640L668 656ZM772 656L790 640L816 656Z" fill="#ff7dac"/><path d="M622 658H815V686H622Z" fill="#ffbdf6" stroke="#ff63c2" stroke-width="4"/>
            <text x="718" y="680" text-anchor="middle" class="c-light" font-size="21" fill="#ff75d3">ARTE ET LABORE</text>
          </svg><span class="name">布莱克本</span></div></td>
      </tr>
    </tbody>
  </table>
  </section>
</main>
</body>
</html>
```

FILE: styles.css
```css
* { box-sizing: border-box; }

body {
  margin: 0;
  min-height: 100vh;
  display: flex;
  flex-direction: column;
  background: #fff;
  color: #333;
  font-family: Roboto, "Noto Sans CJK SC", sans-serif;
}

/* Blue header with diagonal stripes */
.hero {
  position: relative;
  padding-bottom: 46px;
  background: #2a90e9;
  color: #fff;
}
.hero-bg {
  position: absolute;
  inset: 0;
  width: 100%;
  height: 100%;
}
.bar {
  position: relative;
  display: grid;
  grid-template-columns: 1fr auto 1fr;
  align-items: center;
  height: 114px;
  padding: 0 48px 0 36px;
}
.title {
  margin: 0 0 0 12px;
  padding-top: 4px;
  font-size: 36px;
  line-height: 48px;
  font-weight: 400;
}
.icon-btn {
  display: flex;
  padding: 0;
  border: 0;
  background: none;
}
.back { justify-self: start; }
.tools {
  display: flex;
  align-items: center;
  justify-content: flex-end;
  gap: 52px;
}
.share svg { filter: drop-shadow(0 2px 3px rgba(0, 60, 120, .3)); }
.season {
  display: flex;
  align-items: center;
  gap: 12px;
  height: 74px;
  padding: 0 24px;
  border-radius: 37px;
  background: #2375bc;
}
.season-select {
  appearance: none;
  padding: 0;
  border: 0;
  background: none;
  color: #fff;
  font: 34px/40px Roboto, sans-serif;
}

/* White sheet overlapping the header */
.sheet {
  position: relative;
  flex: 1;
  display: flex;
  flex-direction: column;
  margin-top: -33px;
  border-radius: 30px 30px 0 0;
  background: #fff;
}
.tabs {
  display: flex;
  height: 114px;
  border-bottom: 2px solid #f0f0f0;
}
.tab {
  position: relative;
  flex: 1;
  padding-top: 4px;
  color: #333;
  font-size: 39px;
  line-height: 108px;
  text-align: center;
  text-decoration: none;
}
.tab-on { font-weight: 700; }
.tab-on::after {
  content: "";
  position: absolute;
  left: 50%;
  bottom: 0;
  width: 56px;
  height: 8px;
  margin-left: -28px;
  border-radius: 3px;
  background: #349af0;
}

/* Fixture table */
.upper { overflow: hidden; }
.upper .matches { margin-bottom: -74px; }
.matches {
  width: 100%;
  table-layout: fixed;
  border-collapse: collapse;
}
.matches th,
.matches td { padding: 0; white-space: nowrap; }
.matches tr { height: 140px; }
.c-time { width: 22%; }
.c-score { width: 90px; }
.c-away { width: 35%; }
.matches .heads { height: 108px; }
.heads th {
  color: #999ca3;
  font-size: 32px;
  font-weight: 400;
}
.heads .h-home { padding-right: 78px; text-align: right; }
.heads .h-away { padding-left: 79px; text-align: left; }
.matches .round { height: 137px; }
.matches .round th {
  padding-top: 18px;
  font-size: 38px;
  font-weight: 700;
}
.matches .time {
  padding-left: 30px;
  font-size: 33px;
}
.team {
  display: flex;
  align-items: center;
  gap: 14px;
  padding: 0 9px 0 11px;
  font-size: 32px;
}
.name { padding-bottom: 4px; }
.home { justify-content: flex-end; }
.crest { flex: none; width: 70px; height: 70px; }
.score {
  font-size: 42px;
  font-weight: 500;
  text-align: center;
}

/* Pink block, stepped at its top right */
.lower {
  flex: 1;
  margin-top: -16px;
  overflow: hidden;
  background: #ffadff;
  color: #ff6bde;
  clip-path: polygon(0 16px, 83% 16px, 83% 0, 100% 0, 100% 100%, 0 100%);
}
.shifted { margin: -50px 0 0 32px; }
.lower .time,
.lower .team { font-weight: 300; }
.lower .time { font-size: 34px; }
.lower .score { font-weight: 400; }

/* Lettering on the crests */
.c-sans { font-family: "Open Sans", sans-serif; font-weight: 700; }
.c-serif { font-family: "Liberation Serif", serif; font-weight: 700; }
.c-cond { font-family: Roboto, sans-serif; font-weight: 700; }
.c-light { font-family: Lato, sans-serif; font-weight: 400; }
```
